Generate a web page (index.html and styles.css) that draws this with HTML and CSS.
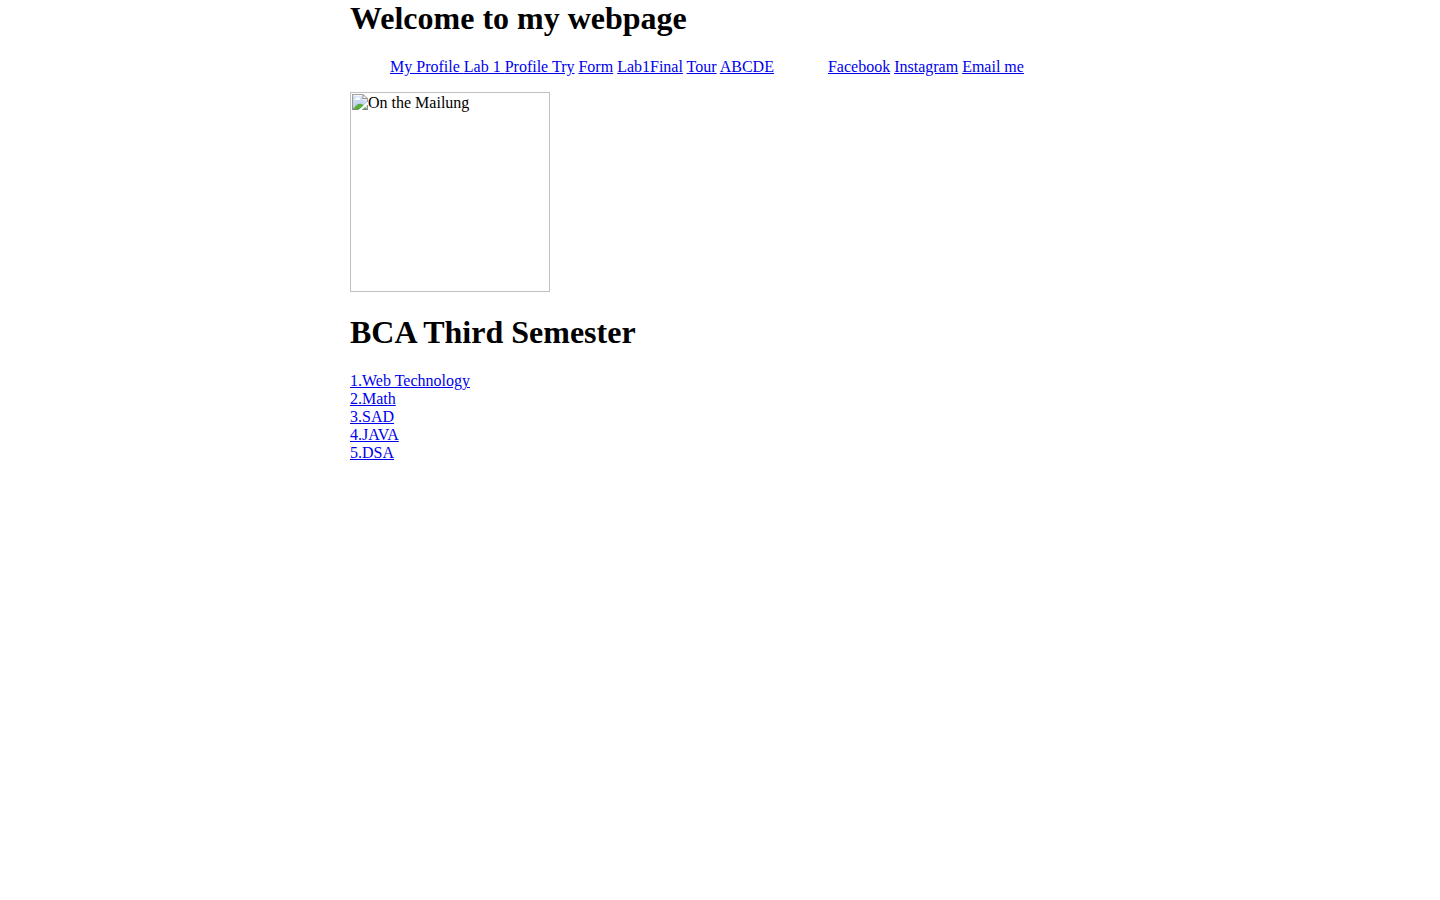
FILE: index.html
```html
<!DOCTYPE html>
<html lang="en">
<head>
<meta charset="utf-8">
<title>My webpage</title>
<link rel="stylesheet" href="styles.css">
</head>
<body>
<main class="page">
  <h1 class="title">Welcome to my webpage</h1>
  <nav class="nav">
    <div><a href="#profile">My Profile </a><a href="#lab1">Lab 1 </a><a href="#try">Profile Try</a> <a href="#form">Form</a> <a href="#final">Lab1Final</a> <a href="#tour">Tour</a> <a href="#abcde">ABCDE</a></div>
    <div><a href="#facebook">Facebook</a> <a href="#instagram">Instagram</a> <a href="#email">Email me</a></div>
  </nav>
  <img class="photo" src="mailung.jpg" alt="On the Mailung">
  <h1 class="title semester">BCA Third Semester</h1>
  <div class="subjects">
    <a href="#web">1.Web Technology</a><br>
    <a href="#math">2.Math</a><br>
    <a href="#sad">3.SAD</a><br>
    <a href="#java">4.JAVA</a><br>
    <a href="#dsa">5.DSA</a>
  </div>
</main>
</body>
</html>
```
FILE: styles.css
```css
body {
  margin: 0;
  background: #fff;
  color: #000;
  font-family: "Liberation Serif", "Times New Roman", serif;
  font-size: 16px;
  line-height: 18px;
}

.page {
  max-width: 740px;
  margin: 0 auto;
}

.title {
  margin: 0 0 21px;
  font-size: 32px;
  line-height: 37px;
}

.semester {
  margin-top: 22px;
}

.nav {
  display: flex;
  flex-wrap: wrap;
  column-gap: 54px;
  margin-bottom: 16px;
  padding-left: 40px;
}

a {
  color: #0000ee;
  text-decoration: underline;
}

.photo {
  display: block;
  box-sizing: border-box;
  width: 200px;
  height: 200px;
  padding: 1px;
  border: 1px solid #c0c0c0;
}
```
